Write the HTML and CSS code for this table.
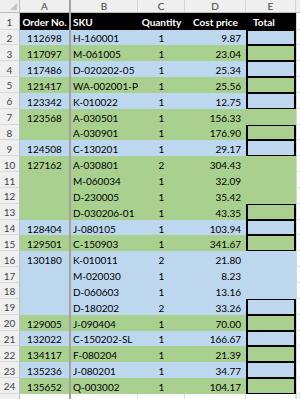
FILE: index.html
```html
<!DOCTYPE html>
<html>
<head>
<meta charset="utf-8">
<link rel="stylesheet" href="styles.css">
</head>
<body>
<div class="sheet">
  <div class="row colhead">
    <div class="corner"><span class="tri"></span></div>
    <div class="ch a">A</div><div class="ch">B</div><div class="ch">C</div><div class="ch">D</div><div class="ch">E</div><div class="ch f"></div>
  </div>
  <div class="row r1">
    <div class="rh">1</div>
    <div class="c a hd">Order No.</div><div class="c b hd">SKU</div><div class="c q hd">Quantity</div><div class="c hd mid">Cost price</div><div class="c hd left">Total</div><div class="c f"></div>
  </div>
  <div class="row blue"><div class="rh">2</div><div class="c a">112698</div><div class="c b">H-160001</div><div class="c q">1</div><div class="c d">9.87</div><div class="c e box"></div><div class="c f"></div></div>
  <div class="row green"><div class="rh">3</div><div class="c a">117097</div><div class="c b">M-061005</div><div class="c q">1</div><div class="c d">23.04</div><div class="c e box"></div><div class="c f"></div></div>
  <div class="row blue"><div class="rh">4</div><div class="c a">117486</div><div class="c b">D-020202-05</div><div class="c q">1</div><div class="c d">25.34</div><div class="c e box"></div><div class="c f"></div></div>
  <div class="row green"><div class="rh">5</div><div class="c a">121417</div><div class="c b">WA-002001-P</div><div class="c q">1</div><div class="c d">25.56</div><div class="c e box"></div><div class="c f"></div></div>
  <div class="row blue"><div class="rh">6</div><div class="c a">123342</div><div class="c b">K-010022</div><div class="c q">1</div><div class="c d">12.75</div><div class="c e box"></div><div class="c f"></div></div>
  <div class="row green"><div class="rh">7</div><div class="c a">123568</div><div class="c b">A-030501</div><div class="c q">1</div><div class="c d">156.33</div><div class="c e"></div><div class="c f"></div></div>
  <div class="row green"><div class="rh">8</div><div class="c a"></div><div class="c b">A-030901</div><div class="c q">1</div><div class="c d">176.90</div><div class="c e box"></div><div class="c f"></div></div>
  <div class="row blue"><div class="rh">9</div><div class="c a">124508</div><div class="c b">C-130201</div><div class="c q">1</div><div class="c d">29.17</div><div class="c e box"></div><div class="c f"></div></div>
  <div class="row green"><div class="rh">10</div><div class="c a">127162</div><div class="c b">A-030801</div><div class="c q">2</div><div class="c d">304.43</div><div class="c e"></div><div class="c f"></div></div>
  <div class="row green"><div class="rh">11</div><div class="c a"></div><div class="c b">M-060034</div><div class="c q">1</div><div class="c d">32.09</div><div class="c e"></div><div class="c f"></div></div>
  <div class="row green"><div class="rh">12</div><div class="c a"></div><div class="c b">D-230005</div><div class="c q">1</div><div class="c d">35.42</div><div class="c e"></div><div class="c f"></div></div>
  <div class="row green"><div class="rh">13</div><div class="c a"></div><div class="c b">D-030206-01</div><div class="c q">1</div><div class="c d">43.35</div><div class="c e box"></div><div class="c f"></div></div>
  <div class="row blue"><div class="rh">14</div><div class="c a">128404</div><div class="c b">J-080105</div><div class="c q">1</div><div class="c d">103.94</div><div class="c e box"></div><div class="c f"></div></div>
  <div class="row green"><div class="rh">15</div><div class="c a">129501</div><div class="c b">C-150903</div><div class="c q">1</div><div class="c d">341.67</div><div class="c e box"></div><div class="c f"></div></div>
  <div class="row blue"><div class="rh">16</div><div class="c a">130180</div><div class="c b">K-010011</div><div class="c q">2</div><div class="c d">21.80</div><div class="c e"></div><div class="c f"></div></div>
  <div class="row blue"><div class="rh">17</div><div class="c a"></div><div class="c b">M-020030</div><div class="c q">1</div><div class="c d">8.23</div><div class="c e"></div><div class="c f"></div></div>
  <div class="row blue"><div class="rh">18</div><div class="c a"></div><div class="c b">D-060603</div><div class="c q">1</div><div class="c d">13.16</div><div class="c e"></div><div class="c f"></div></div>
  <div class="row blue"><div class="rh">19</div><div class="c a"></div><div class="c b">D-180202</div><div class="c q">2</div><div class="c d">33.26</div><div class="c e box"></div><div class="c f"></div></div>
  <div class="row green"><div class="rh">20</div><div class="c a">129005</div><div class="c b">J-090404</div><div class="c q">1</div><div class="c d">70.00</div><div class="c e box"></div><div class="c f"></div></div>
  <div class="row blue"><div class="rh">21</div><div class="c a">132022</div><div class="c b">C-150202-SL</div><div class="c q">1</div><div class="c d">166.67</div><div class="c e box"></div><div class="c f"></div></div>
  <div class="row green"><div class="rh">22</div><div class="c a">134117</div><div class="c b">F-080204</div><div class="c q">1</div><div class="c d">21.39</div><div class="c e box"></div><div class="c f"></div></div>
  <div class="row blue"><div class="rh">23</div><div class="c a">135236</div><div class="c b">J-080201</div><div class="c q">1</div><div class="c d">34.77</div><div class="c e box"></div><div class="c f"></div></div>
  <div class="row green"><div class="rh">24</div><div class="c a">135652</div><div class="c b">Q-003002</div><div class="c q">1</div><div class="c d">104.17</div><div class="c e box"></div><div class="c f"></div></div>
  <div class="row empty"><div class="rh"></div><div class="c a"></div><div class="c b"></div><div class="c q"></div><div class="c d"></div><div class="c e"></div><div class="c f"></div></div>
</div>
</body>
</html>
```

FILE: styles.css
```css
html, body {
  margin: 0;
  padding: 0;
  background: #fff;
  overflow: hidden;
}
.sheet {
  width: 300px;
  height: 399px;
  overflow: hidden;
  font-family: Lato, "Liberation Sans", sans-serif;
  font-size: 10px;
  color: #000;
}
.row {
  display: grid;
  grid-template-columns: 20px 51px 67px 47px 61px 50px 1fr;
  height: 15.85px;
}
.row > div {
  box-sizing: border-box;
  display: flex;
  align-items: center;
  white-space: nowrap;
  overflow: hidden;
  padding-top: 2px;
}
.colhead {
  height: 13px;
  background: #efefef;
}
.colhead > div {
  padding-top: 0;
}
.corner {
  position: relative;
  border-right: 1px solid #bdbdbd;
  border-bottom: 1px solid #bdbdbd;
}
.tri {
  position: absolute;
  right: 2px;
  bottom: 2px;
  width: 0;
  height: 0;
  border-left: 7px solid transparent;
  border-bottom: 7px solid #c6c6c6;
}
.ch {
  justify-content: center;
  color: #444;
  font-size: 10px;
  border-right: 1px solid #d6d6d6;
  border-bottom: 1px solid #bdbdbd;
}
.ch.a {
  border-right: 2px solid #a3a3a3;
}
.ch.f {
  border-right: none;
}
.r1 {
  height: 16.5px;
  background: #000;
}
.rh {
  justify-content: center;
  background: #efefef;
  color: #444;
  border-right: 1px solid #bdbdbd;
  border-bottom: 1px solid #d9d9d9;
}
.c.a {
  justify-content: center;
  border-right: 2px solid #a3a3a3;
}
.c.b {
  padding-left: 2px;
}
.c.q {
  justify-content: center;
}
.c.d {
  justify-content: flex-end;
  padding-right: 5px;
}
.c.f {
  background: #fff;
  border-left: 1px solid #d4d4d4;
  border-bottom: 1px solid #dcdcdc;
}
.hd {
  color: #fff;
  font-weight: 700;
}
.hd.mid {
  justify-content: center;
}
.hd.left {
  padding-left: 7px;
}
.blue > .c {
  background-color: #bdd7ee;
}
.green > .c {
  background-color: #a9d08e;
}
.blue > .c.f,
.green > .c.f,
.r1 > .c.f {
  background: #fff;
}
.empty > .c {
  background: #fff;
  border-bottom: 1px solid #dcdcdc;
}
.empty > .c:not(.a) {
  border-right: 1px solid #dcdcdc;
}
.box {
  border: 1px solid #000;
  box-shadow: inset 1px 0 0 #000, inset -1px 0 0 #000;
}
```
